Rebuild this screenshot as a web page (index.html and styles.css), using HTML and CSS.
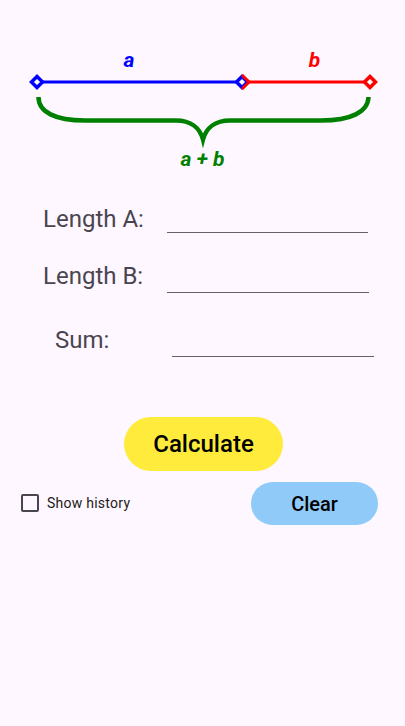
FILE: index.html
```html
<!DOCTYPE html>
<html>
<head>
<meta charset="utf-8">
<link rel="stylesheet" href="styles.css">
</head>
<body>
<div class="screen">
  <svg class="diagram" width="405" height="180" viewBox="0 0 405 180">
    <line x1="37" y1="82" x2="242" y2="82" stroke="#0000ff" stroke-width="3"/>
    <line x1="242" y1="82" x2="370" y2="82" stroke="#ff0000" stroke-width="3"/>
    <polygon points="37,76.5 42.5,82 37,87.5 31.5,82" fill="#ffffff" stroke="#0000ff" stroke-width="3.5"/>
    <polygon points="242,76.5 247.5,82 242,87.5 236.5,82" fill="#ffffff" stroke="#0000ff" stroke-width="3.5"/>
    <polyline points="242,75 249,82 242,89" fill="none" stroke="#ff0000" stroke-width="3"/>
    <polygon points="370,76.5 375.5,82 370,87.5 364.5,82" fill="#ffffff" stroke="#ff0000" stroke-width="3.5"/>
    <path d="M38.5,97 C38.5,112 55,120.5 85,120.5 L176,120.5 C191,120.5 200,128 203,139.5 C206,128 215,120.5 230,120.5 L321,120.5 C351,120.5 368,112 368.5,97" fill="none" stroke="#008000" stroke-width="4.5" stroke-miterlimit="10"/>
    <text x="129" y="67" class="lbl lbl-a">a</text>
    <text x="314.5" y="67" class="lbl lbl-b">b</text>
    <text x="202.5" y="165.5" class="lbl lbl-sum">a + b</text>
  </svg>

  <div class="row row-a">
    <span class="label label-wide">Length A:</span>
    <div class="field field-a"></div>
  </div>
  <div class="row row-b">
    <span class="label label-wide">Length B:</span>
    <div class="field field-b"></div>
  </div>
  <div class="row row-sum">
    <span class="label label-sum">Sum:</span>
    <div class="field field-b"></div>
  </div>

  <button class="btn btn-calc">Calculate</button>

  <div class="bottom">
    <label class="check">
      <span class="box"></span>
      <span class="check-text">Show history</span>
    </label>
    <button class="btn btn-clear">Clear</button>
  </div>
</div>
</body>
</html>
```

FILE: styles.css
```css
* { box-sizing: border-box; }
html, body {
  margin: 0;
  padding: 0;
  background: #fef7ff;
}
body {
  font-family: Roboto, "Liberation Sans", sans-serif;
  color: #49454f;
  width: 405px;
  height: 726px;
  overflow: hidden;
}
.screen {
  display: flex;
  flex-direction: column;
}
.diagram { display: block; }
.lbl {
  font-family: Roboto, "Liberation Sans", sans-serif;
  font-weight: 700;
  font-style: italic;
  font-size: 21px;
  text-anchor: middle;
}
.lbl-a { fill: #0000ff; }
.lbl-b { fill: #ff0000; }
.lbl-sum { fill: #008000; }

.row {
  display: flex;
  align-items: flex-start;
}
.row-a { margin-top: 25px; padding-left: 43px; }
.row-b { margin-top: 29px; padding-left: 43px; }
.row-sum { margin-top: 33px; padding-left: 55px; }
.label {
  font-size: 24px;
  line-height: 28px;
  color: #49454f;
}
.label-wide { width: 124px; }
.label-sum { width: 117px; }
.field {
  width: 202px;
  border-bottom: 1px solid #66626b;
}
.field-a { height: 28px; width: 201px; }
.field-b { height: 31px; }

.btn {
  border: none;
  border-radius: 999px;
  font-family: Roboto, "Liberation Sans", sans-serif;
  font-weight: 500;
  color: #000;
  padding: 0;
}
.btn-calc {
  margin-top: 60px;
  margin-left: 124px;
  width: 159px;
  height: 54px;
  background: #ffeb3b;
  font-size: 24px;
}
.bottom {
  margin-top: 11px;
  padding: 0 27px 0 21px;
  display: flex;
  align-items: center;
  justify-content: space-between;
}
.check {
  display: flex;
  align-items: center;
  gap: 8px;
  margin-top: -2px;
}
.box {
  width: 18px;
  height: 18px;
  border: 2px solid #49454f;
  border-radius: 2px;
}
.check-text {
  font-size: 14px;
  letter-spacing: 0.25px;
  color: #1d1b20;
}
.btn-clear {
  width: 127px;
  height: 43px;
  background: #90caf9;
  font-size: 20px;
}
```
